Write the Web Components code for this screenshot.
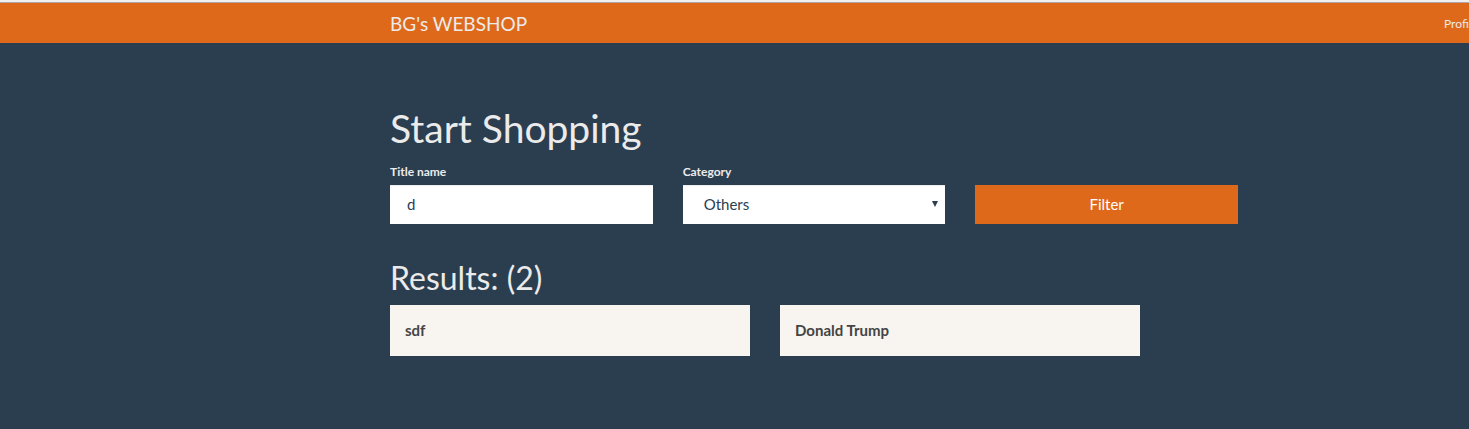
<!DOCTYPE html>
<html lang="en">
<head>
<meta charset="utf-8">
<title>BG's WEBSHOP</title>
<style>
html, body { margin: 0; min-height: 100%; background: #2b3e50; }
body { font: 15px/21px Lato, "Liberation Sans", sans-serif; color: #ebebeb; overflow-x: hidden; }
</style>
</head>
<body>
<shop-navbar><span slot="brand">BG's WEBSHOP</span><span slot="account">Profile</span></shop-navbar>
<shop-page>
  <shop-heading>Start Shopping</shop-heading>
  <shop-filter></shop-filter>
  <shop-heading level="2">Results: (2)</shop-heading>
  <shop-results>
    <shop-item>sdf</shop-item>
    <shop-item>Donald Trump</shop-item>
  </shop-results>
</shop-page>
<script>
class Base extends HTMLElement {
  connectedCallback() {
    if (this.shadowRoot) return;
    this.attachShadow({ mode: 'open' }).innerHTML =
      '<style>*{box-sizing:border-box}' + this.css() + '</style>' + this.html();
  }
}
customElements.define('shop-navbar', class extends Base {
  css() { return `
    :host { display: block; border-top: 2px solid #f1f1f1; }
    nav { display: flex; align-items: center; justify-content: space-between; min-height: 41px;
      padding: 2px 0 0 390px; overflow: hidden; background: #df691a; border-top: 1px solid #b3a5a5; }
    a { color: #ebebeb; text-decoration: none; white-space: nowrap; }
    .brand { font-size: 19px; line-height: 20px; }
    .account { flex: 0 0 25px; min-width: 0; font-size: 12px; line-height: 20px; }`; }
  html() { return `<nav><a class="brand" href="#"><slot name="brand"></slot></a>
    <a class="account" href="#profile"><slot name="account"></slot></a></nav>`; }
});
customElements.define('shop-page', class extends Base {
  css() { return `
    :host { display: block; }
    main { padding: 63px 30px 64px 390px; }`; }
  html() { return `<main><slot></slot></main>`; }
});
customElements.define('shop-heading', class extends Base {
  css() { return `
    :host { display: block; }
    h1, h2 { margin: 0; font-weight: 400; }
    h1 { font-size: 39px; line-height: 44px; margin-bottom: 11px; }
    h2 { font-size: 32px; line-height: 36px; margin: 36px 0 9px; }`; }
  html() {
    const h = this.getAttribute('level') === '2' ? 'h2' : 'h1';
    return `<${h}><slot></slot></${h}>`;
  }
});
customElements.define('shop-filter', class extends Base {
  css() { return `
    :host { display: block; max-width: 848px; }
    form { display: grid; grid-template-columns: repeat(3, minmax(0, 1fr)); column-gap: 30px; align-items: end; }
    label { display: block; margin-bottom: 3px; font-size: 12px; line-height: 21px; font-weight: 700; }
    input, select, button { display: block; width: 100%; height: 39px; margin: 0; border: 0; border-radius: 0;
      font: inherit; line-height: 21px; }
    input, select { background: #fff; color: #2b3e50; box-shadow: inset 0 1px 1px rgba(0,0,0,.075); }
    input { padding: 8px 17px 10px; }
    select { appearance: none; padding: 8px 21px; }
    button { background: #df691a; color: #fff; }
    .pick { position: relative; }
    .pick svg { position: absolute; right: 7px; top: 16px; pointer-events: none; }`; }
  html() { return `<form onsubmit="return false">
    <div><label for="title">Title name</label><input id="title" type="text" value="d"></div>
    <div><label for="category">Category</label>
      <div class="pick"><select id="category"><option>Others</option></select>
      <svg width="6" height="6" viewBox="0 0 6 6"><path d="M0 0h6L3 6z" fill="#2b3e50"/></svg></div></div>
    <button type="submit">Filter</button></form>`; }
});
customElements.define('shop-results', class extends Base {
  css() { return `
    :host { display: grid; grid-template-columns: repeat(2, minmax(0, 1fr)); gap: 30px; max-width: 750px; }`; }
  html() { return `<slot></slot>`; }
});
customElements.define('shop-item', class extends Base {
  css() { return `
    :host { display: block; padding: 15px; background: #f8f4ef; color: #444; font-weight: 700; }`; }
  html() { return `<slot></slot>`; }
});
</script>
</body>
</html>
